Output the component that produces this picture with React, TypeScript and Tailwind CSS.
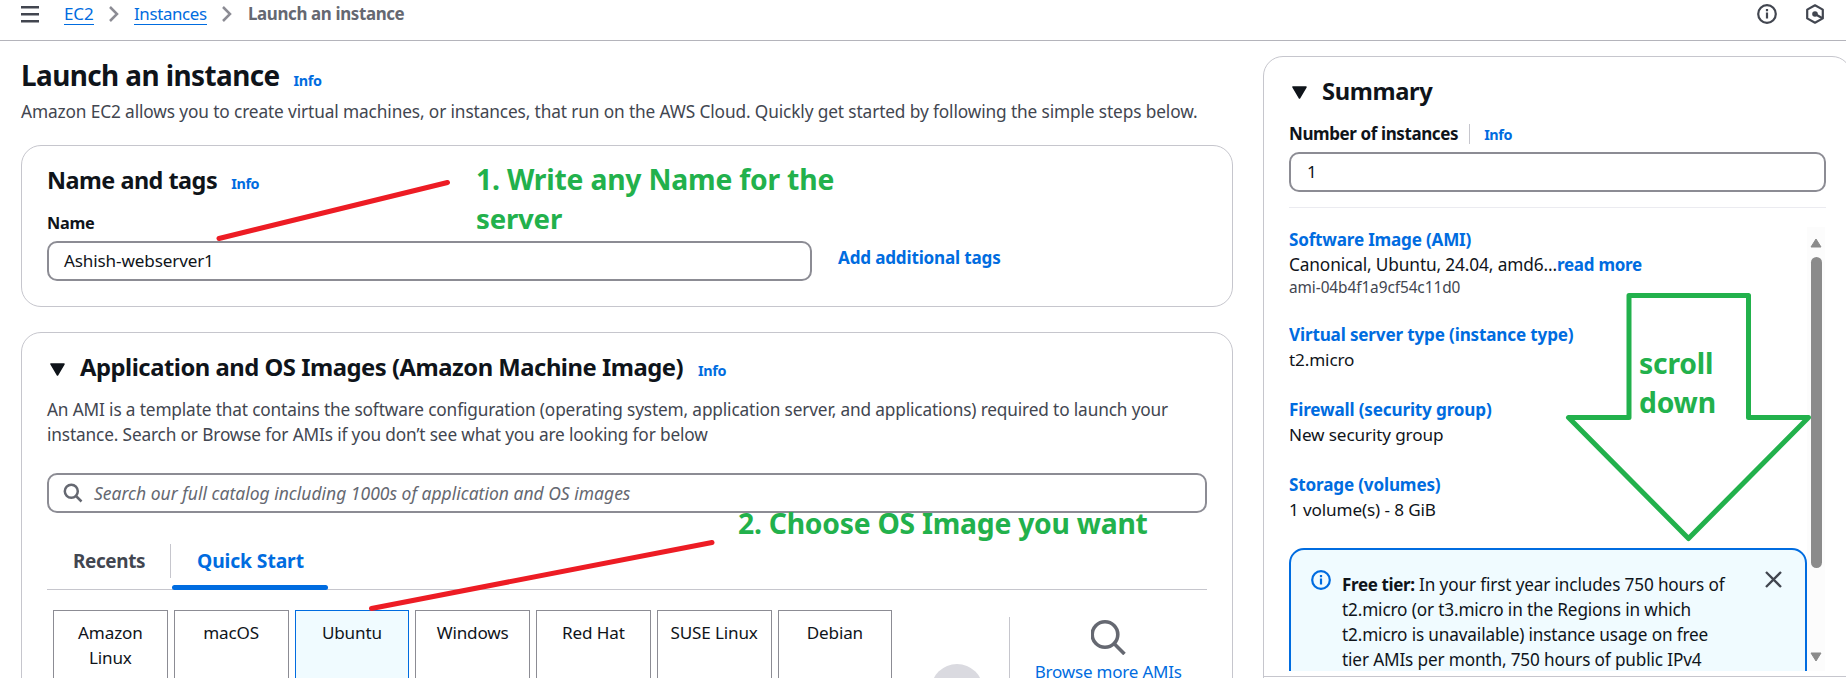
import React from "react";

function Info({ className = "" }: { className?: string }) {
  return <a className={`text-[14.4px] leading-5 font-bold tracking-[-0.36px] text-[#006ce0] ${className}`}>Info</a>;
}

function Caret({ className = "" }: { className?: string }) {
  return (
    <svg className={`h-[13px] w-[15px] shrink-0 ${className}`} viewBox="0 0 15 13">
      <path d="M1 1h13L7.500 12z" fill="#0f141a" stroke="#0f141a" strokeWidth="1.500" strokeLinejoin="round" />
    </svg>
  );
}

function Chevron() {
  return (
    <svg className="h-[18px] w-[12px] shrink-0" viewBox="0 0 12 18">
      <path d="M2 2l7 7-7 7" fill="none" stroke="#8c8c94" strokeWidth="2.500" />
    </svg>
  );
}

function InfoCircle({ className }: { className: string }) {
  return (
    <svg className={`h-5 w-5 shrink-0 ${className}`} viewBox="0 0 20 20" fill="none" stroke="currentColor">
      <circle cx="10" cy="10" r="8.800" strokeWidth="2.200" />
      <path d="M10 8.500v6M10 5v2.300" strokeWidth="2.200" />
    </svg>
  );
}

const osTiles = ["Amazon Linux", "macOS", "Ubuntu", "Windows", "Red Hat", "SUSE Linux", "Debian"];

const summaryItems = [
  { title: "Virtual server type (instance type)", value: "t2.micro" },
  { title: "Firewall (security group)", value: "New security group" },
  { title: "Storage (volumes)", value: "1 volume(s) - 8 GiB" },
];

function Header() {
  return (
    <header className="flex h-[41px] items-start border-b border-[#b4b4bb] pr-[21px] pl-[21px] text-[17px]">
      <svg className="mt-[6px] h-[17px] w-[18px]" viewBox="0 0 18 17">
        <path d="M0 1.250h18M0 8.250h18M0 15.250h18" stroke="#424650" strokeWidth="2.300" />
      </svg>
      <nav className="ml-[25px] flex h-[25px] items-center pt-px">
        <a className="h-[24px] w-[30px] border-b border-[#006ce0] leading-[25px] tracking-[-0.1px] text-[#006ce0]">EC2</a>
        <span className="mr-[14px] ml-[14px] flex pt-[2px]"><Chevron /></span>
        <a className="h-[24px] w-[73px] border-b border-[#006ce0] text-[16.9px] leading-[25px] tracking-[-0.36px] text-[#006ce0]">Instances</a>
        <span className="mr-[15px] ml-[14px] flex pt-[2px]"><Chevron /></span>
        <span className="text-[16.9px] leading-[25px] font-bold tracking-[-0.36px] text-[#656871]">Launch an instance</span>
      </nav>
      <div className="ml-auto flex gap-[28px] pt-1 text-[#424650]">
        <InfoCircle className="" />
        <svg className="h-5 w-5" viewBox="0 0 20 20" fill="none" stroke="currentColor" strokeWidth="2.200">
          <path d="M10 1.300l7.800 4.300v8.800L10 18.700l-7.800-4.300V5.600z" strokeLinejoin="round" />
          <circle cx="10" cy="10" r="2.800" fill="currentColor" stroke="none" />
          <path d="M10 10l7 4" />
        </svg>
      </div>
    </header>
  );
}

function NameCard() {
  return (
    <section className="mt-[21px] h-[162px] rounded-[20px] border border-[#c6c6cd] px-[25px] pt-[19px]">
      <div className="flex items-baseline">
        <h2 className="text-[23.4px] leading-[30px] font-bold tracking-[-0.5px]">Name and tags</h2>
        <Info className="ml-[14px]" />
      </div>
      <div className="mt-[16px] text-[16.3px] leading-[25px] font-bold tracking-[-0.3px]">Name</div>
      <div className="mt-[5px] flex items-start">
        <div className="h-10 w-[765px] rounded-[10px] border-2 border-[#8c8c94] px-[15px] text-[17.1px] leading-[36px] tracking-[-0.13px]">Ashish-webserver1</div>
        <a className="mt-[4px] ml-[26px] text-[17.1px] leading-[25px] font-bold tracking-[-0.18px] text-[#006ce0]">Add additional tags</a>
      </div>
    </section>
  );
}

function ImagesCard() {
  return (
    <section className="mt-[25px] h-[400px] rounded-[20px] border border-[#c6c6cd] px-[25px] pt-[19px]">
      <div className="flex items-baseline">
        <Caret className="mr-[15px] ml-[3px]" />
        <h2 className="text-[23.8px] leading-[30px] font-bold tracking-[-0.48px]">Application and OS Images (Amazon Machine Image)</h2>
        <Info className="ml-[15px]" />
      </div>
      <p className="mt-[15px] text-[17.25px] leading-[25px] tracking-[-0.15px] whitespace-nowrap text-[#424650]">
        An AMI is a template that contains the software configuration (operating system, application server, and applications) required to launch your
        <br />
        instance. Search or Browse for AMIs if you don’t see what you are looking for below
      </p>
      <div className="mt-[26px] flex h-10 items-center rounded-[10px] border-2 border-[#8c8c94] pl-[14px]">
        <svg className="h-5 w-5" viewBox="0 0 20 20" fill="none" stroke="#656871" strokeWidth="2.500">
          <circle cx="8.300" cy="8.300" r="6.500" />
          <path d="M13 13l5.500 5.500" />
        </svg>
        <span className="ml-[11px] text-[17.5px] leading-[25px] text-[#656871] italic">Search our full catalog including 1000s of application and OS images</span>
      </div>
      <div className="mt-[31px] flex h-[46px] border-b border-[#c6c6cd]">
        <div className="flex h-[34px] w-[124px] items-center border-r border-[#c6c6cd] pl-[26px] text-[18.9px] font-bold tracking-[-0.36px] text-[#424650]">Recents</div>
        <div className="ml-[1px] flex h-[46px] w-[156px] flex-col">
          <span className="h-[41px] pl-[25px] text-[19.3px] leading-[34px] font-bold tracking-[-0.1px] whitespace-nowrap text-[#006ce0]">Quick Start</span>
          <span className="h-[5px] shrink-0 rounded-[3px] bg-[#006ce0]" />
        </div>
      </div>
      <div className="mt-[20px] flex pl-[6px]">
        <div className="flex gap-[6px]">
          {osTiles.map((name) => (
            <div
              key={name}
              className={`h-[140px] w-[114.75px] shrink-0 border px-2 pt-[9px] text-center text-[17.1px] leading-[25px] tracking-[-0.15px] ${
                name === "Ubuntu" ? "border-[#006ce0] bg-[#f0fbff]" : "border-[#8c8c94]"
              }`}
            >
              {name === "Amazon Linux" ? (
                <>
                  Amazon
                  <br />
                  Linux
                </>
              ) : (
                <span className="whitespace-nowrap">{name}</span>
              )}
            </div>
          ))}
        </div>
        <div className="mt-[54px] ml-[39px] h-[52px] w-[52px] shrink-0 rounded-full bg-[#dadae0]" />
        <div className="mt-[7px] ml-[26px] flex h-[140px] w-[197px] flex-col items-center border-l border-[#c6c6cd] pt-[2px]">
          <svg className="ml-[2px] h-[36px] w-[36px]" viewBox="0 0 36 36" fill="none" stroke="#656871" strokeWidth="3.600">
            <circle cx="14" cy="15.500" r="12.800" />
            <path d="M23 24.500l10.500 10.500" />
          </svg>
          <a className="mt-[4px] text-[17px] leading-[25px] tracking-[-0.2px] text-[#006ce0]">Browse more AMIs</a>
        </div>
      </div>
    </section>
  );
}

function Summary() {
  return (
    <aside className="mt-[15px] ml-[30px] flex h-[650px] w-[589px] shrink-0 flex-col rounded-t-[20px] border border-[#c6c6cd] px-[25px] pt-[19px]">
      <div className="flex items-center">
        <Caret className="mt-[2px] mr-[15px] ml-[3px]" />
        <h2 className="text-[23.7px] leading-[30px] font-bold tracking-[-0.35px]">Summary</h2>
      </div>
      <div className="mt-[15px] flex items-center">
        <span className="text-[17px] leading-[25px] font-bold tracking-[-0.4px]">Number of instances</span>
        <span className="mr-[14px] ml-[11px] h-5 w-px bg-[#c6c6cd]" />
        <Info className="mt-[2px]" />
      </div>
      <div className="mt-[6px] h-10 w-[537px] shrink-0 rounded-[10px] border-2 border-[#8c8c94] px-4 text-[17px] leading-[36px]">1</div>
      <div className="mt-[15px] h-px w-[537px] shrink-0 bg-[#ebebf0]" />
      <div className="mt-[19px] flex h-[444px] w-[537px] shrink-0 overflow-hidden">
        <div className="w-[518px] shrink-0">
          <div className="h-[95px] text-[17.25px] leading-[25px] tracking-[-0.13px]">
            <div className="text-[17.1px] font-bold tracking-[-0.2px] text-[#006ce0]">Software Image (AMI)</div>
            <div>
              Canonical, Ubuntu, 24.04, amd6...<a className="text-[17px] font-bold tracking-[-0.25px] text-[#006ce0]">read more</a>
            </div>
            <div className="pt-px text-[15.4px] leading-5 tracking-[-0.08px] text-[#424650]">ami-04b4f1a9cf54c11d0</div>
          </div>
          {summaryItems.map((item) => (
            <div key={item.title} className="h-[75px] text-[17.15px] leading-[25px] tracking-[-0.13px]">
              <div className="text-[17.1px] font-bold tracking-[-0.16px] text-[#006ce0]">{item.title}</div>
              <div>{item.value}</div>
            </div>
          ))}
          <div className="mt-px flex h-[200px] w-[518px] rounded-[15px] border-2 border-[#006ce0] bg-[#f0fbff] pt-5 pl-5">
            <InfoCircle className="text-[#006ce0]" />
            <p className="mt-[2px] ml-[11px] text-[17.2px] leading-[25px] tracking-[-0.15px] whitespace-nowrap">
              <b className="text-[17px] font-bold tracking-[-0.35px]">Free tier:</b> In your first year includes 750 hours of
              <br />
              t2.micro (or t3.micro in the Regions in which
              <br />
              t2.micro is unavailable) instance usage on free
              <br />
              tier AMIs per month, 750 hours of public IPv4
            </p>
            <svg className="mt-px mr-[23px] ml-auto h-[17px] w-[17px]" viewBox="0 0 17 17">
              <path d="M1 1l15 15M16 1L1 16" stroke="#424650" strokeWidth="2.300" />
            </svg>
          </div>
        </div>
        <div className="flex w-[18px] shrink-0 flex-col items-center bg-[#fcfcfc] pt-[11px]">
          <svg className="h-[10px] w-[12px] shrink-0" viewBox="0 0 12 10">
            <path d="M6 1l5 8H1z" fill="#8b8b8b" stroke="#8b8b8b" strokeLinejoin="round" />
          </svg>
          <div className="mt-[9px] h-[311px] w-[11px] shrink-0 rounded-full bg-[#8b8b8b]" />
          <svg className="mt-[84px] h-[10px] w-[12px] shrink-0" viewBox="0 0 12 10">
            <path d="M1 1h10L6 9z" fill="#8b8b8b" stroke="#8b8b8b" strokeLinejoin="round" />
          </svg>
        </div>
      </div>
      <div className="mt-[5px] -mr-[25px] -ml-[25px] h-px shrink-0 bg-[#c6c6cd]" />
    </aside>
  );
}

function Annotations() {
  return (
    <div className="pointer-events-none absolute inset-0 text-[28.3px] leading-[38.5px] font-bold tracking-[-0.2px] whitespace-nowrap text-[#22b14c]">
      <svg className="absolute inset-0 h-[678px] w-[1846px]" viewBox="0 0 1846 678" fill="none">
        <g stroke="#ed1c24" strokeWidth="5" strokeLinecap="round">
          <path d="M219 238.500L447.500 182.500" />
          <path d="M371.500 608.500L712 542.500" />
        </g>
        <path d="M1629 295.500H1748.500V417.500H1808.500L1688.500 538.500L1568.500 417.500H1629Z" stroke="#22b14c" strokeWidth="5" strokeLinejoin="round" />
      </svg>
      <div className="absolute top-[160px] left-[476px]">
        1. Write any Name for the
        <br />
        <span className="text-[27.6px]">server</span>
      </div>
      <div className="absolute top-[504px] left-[738px] tracking-[-0.25px]">2. Choose OS Image you want</div>
      <div className="absolute top-[344px] left-[1639px]">
        scroll
        <br />
        down
      </div>
    </div>
  );
}

export default function App() {
  return (
    <div className="relative h-[678px] w-[1846px] overflow-hidden bg-white font-['Noto_Sans','Open_Sans',sans-serif] text-[#0f141a]">
      <Header />
      <div className="flex">
        <main className="ml-[21px] w-[1212px] shrink-0 pt-[15px]">
          <div className="flex items-baseline">
            <h1 className="text-[27.9px] leading-[38px] font-bold tracking-[-0.57px]">Launch an instance</h1>
            <Info className="ml-[14px]" />
          </div>
          <p className="mt-[5px] text-[17.3px] leading-[25px] tracking-[-0.13px] whitespace-nowrap text-[#424650]">
            Amazon EC2 allows you to create virtual machines, or instances, that run on the AWS Cloud. Quickly get started by following the simple steps below.
          </p>
          <NameCard />
          <ImagesCard />
        </main>
        <Summary />
      </div>
      <Annotations />
    </div>
  );
}
